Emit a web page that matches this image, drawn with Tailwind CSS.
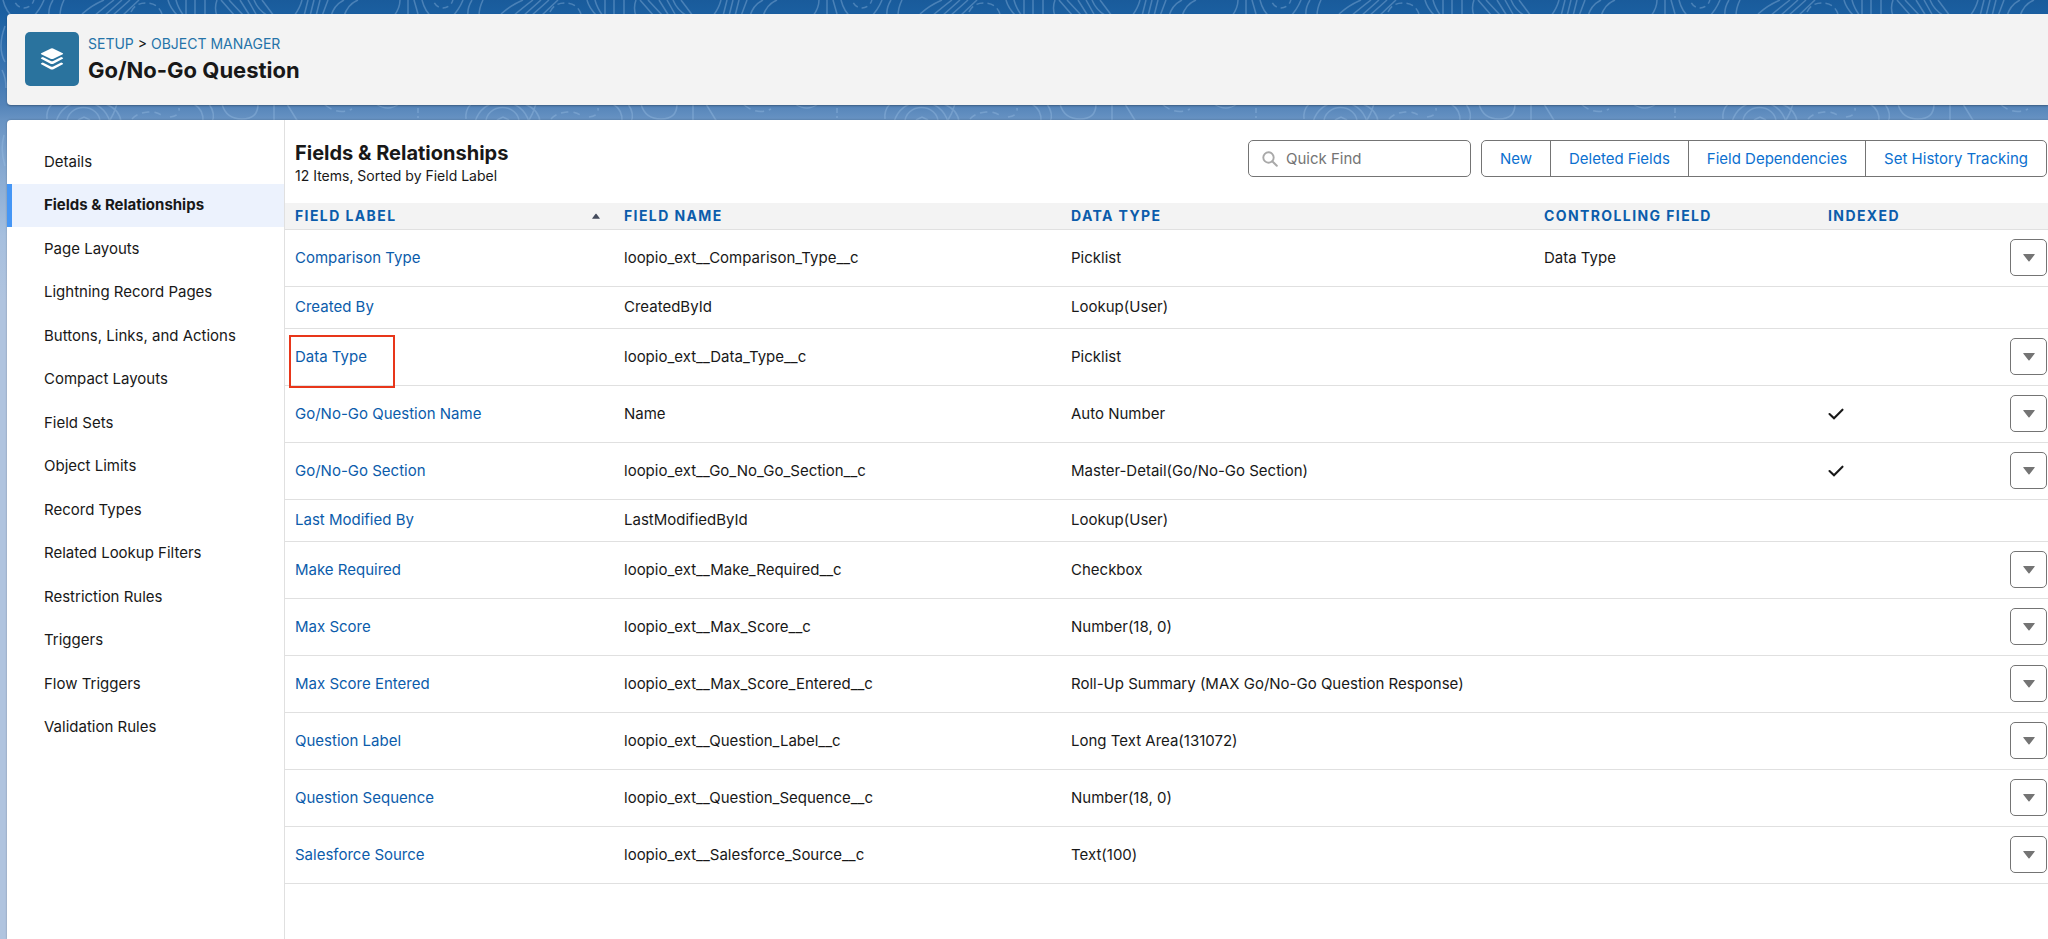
<!DOCTYPE html>
<html lang="en">
<head>
<meta charset="utf-8">
<meta name="viewport" content="width=device-width, initial-scale=1">
<title>Go/No-Go Question | Object Manager</title>
<script src="https://cdn.jsdelivr.net/npm/@tailwindcss/browser@4"></script>
</head>
<body class="relative isolate min-h-screen flex flex-col bg-[#b0c4df] font-['Inter','Liberation_Sans',sans-serif] text-[15px] leading-5 text-[#181818] overflow-x-hidden">

<!-- Topographic page background -->
<div class="absolute inset-x-0 top-0 -z-10 h-[300px] bg-[linear-gradient(to_bottom,#195b9b_0px,#1b60a2_16px,#3470ae_60px,#5484b9_105px,#6893c3_120px,#86a9d1_170px,#a6bfde_235px,#b0c4df_300px)]">
  <svg class="w-full h-full" aria-hidden="true">
    <defs>
      <pattern id="topo" width="419" height="300" patternUnits="userSpaceOnUse">
        <g fill="none" stroke="#9fc3e6" stroke-opacity=".36" stroke-width="1.5">
          <circle cx="24" cy="-2" r="10" stroke-dasharray="6 4"/>
          <path d="M3 0Q6 12 14 18M44 0Q40 10 32 18M53 0Q48 8 49 16M64 0Q60 8 60 16"/>
          <path d="M82 14Q92 5 104 0M94 16Q106 6 114 0M104 16L122 0M112 16L130 0M122 16L139 0"/>
          <path d="M131 12Q135 3 146 3Q158 3 162 14" stroke-dasharray="7 4"/>
          <path d="M168 0Q170 8 178 16M176 0Q178 8 184 16M186 0V16M195 0V16M205 0V16M217 0Q214 8 217 16"/>
          <path d="M221 0L235 16M229 0L244 16M240 0L250 16M248 0L257 16M254 0Q258 10 268 16M262 0L274 16"/>
          <path d="M294 16Q300 8 302 0M304 16L308 0M310 16L314 0M316 16L320 0M322 16L328 0M331 16Q334 5 344 0M344 16Q348 4 358 0"/>
          <path d="M394 16Q400 8 400 0M408 0V14M414 0L418 14"/>
          <path d="M47 119Q46 110 52 104M56 122A28 28 0 0 1 110 122M67 122A16 14 0 0 1 100 122M78 120L84 117L90 120M106 104Q120 110 121 122M117 104Q114 114 109 122"/>
          <path d="M132 119Q137 113 148 112T164 118M170 117Q180 116 179 108" stroke-dasharray="7 5"/>
          <path d="M194 104Q204 110 203 122M209 104Q216 114 212 122M222 104Q226 119 242 119Q258 119 258 104M274 104V122M287 104L298 122"/>
          <path d="M324 104Q338 116 352 109" stroke-dasharray="9 5"/>
          <path d="M376 104Q388 112 399 104"/>
          <path d="M418 108V118" stroke-dasharray="5 3"/>
          <path d="M5 26Q-3 48 5 62M2 70Q6 78 6 88M4 135Q0 150 5 166"/>
        </g>
      </pattern>
    </defs>
    <rect width="100%" height="100%" fill="url(#topo)"/>
  </svg>
</div>

<!-- Shared icons -->
<svg class="hidden" aria-hidden="true">
  <symbol id="caret" viewBox="0 0 12 8"><path d="M.6 0h10.8q.6.3.2.8L6.500 7.300q-.5.5-1 0L.4.8Q0 .3.600 0z" fill="currentColor"/></symbol>
  <symbol id="check" viewBox="0 0 16 12"><path d="M1.500 6L6 10.300L14.500 1.700" fill="none" stroke="currentColor" stroke-width="2.100" stroke-linecap="round"/></symbol>
</svg>

<header class="ml-[7px] mt-[14px] flex items-center gap-[9px] rounded-l-[4px] bg-[#f3f3f3] pl-[18px] pt-[18px] pb-[19px] shadow-[0_1px_2px_rgba(0,0,0,0.3)]">
  <div class="flex size-[54px] items-center justify-center rounded-[5px] bg-[#2a739e]">
    <svg class="h-[22px] w-6 text-white" viewBox="0 0 24 22" fill="currentColor" aria-hidden="true">
      <path d="M12 0.300Q12.500.3 13 .6L22.800 5.200Q23.500 5.700 22.800 6.200L13 10.900Q12 11.300 11 10.900L1.200 6.200Q.5 5.700 1.200 5.200L11 .6Q11.500.3 12 .3z"/>
      <path d="M1.200 9.800L2.800 9.100L10.800 13Q12 13.500 13.200 13L21.200 9.100L22.800 9.800Q23.500 10.300 22.800 10.800L13 15.900Q12 16.300 11 15.900L1.200 10.800Q.5 10.300 1.200 9.800z"/>
      <path d="M1.200 15.300L2.800 14.600L10.800 18.500Q12 19 13.200 18.500L21.200 14.600L22.800 15.300Q23.500 15.800 22.800 16.300L13 21.400Q12 21.800 11 21.400L1.200 16.300Q.5 15.800 1.200 15.300z"/>
    </svg>
  </div>
  <div class="pt-[2px]">
    <nav aria-label="Breadcrumb" class="text-sm"><a href="#" class="text-[#2574a9]">SETUP</a> &gt; <a href="#" class="text-[#2574a9]">OBJECT MANAGER</a></nav>
    <h1 class="text-[22px] leading-8 font-bold">Go/No-Go Question</h1>
  </div>
</header>

<div class="ml-[7px] mt-[15px] flex flex-1 rounded-tl-[4px] bg-white shadow-[0_0_2px_rgba(0,0,0,0.3)]">
  <nav aria-label="Object settings" class="w-[278px] shrink-0 border-r border-[#e0e0e0] pt-5">
    <ul class="grid h-[609px] auto-rows-fr [&_a]:flex [&_a]:h-full [&_a]:items-center [&_a]:pl-[37px]">
      <li><a href="#">Details</a></li>
      <li class="border-l-[5px] border-[#4596f5] bg-[#ecf2fd] font-bold"><a href="#" aria-current="page" class="-ml-[5px]">Fields &amp; Relationships</a></li>
      <li><a href="#">Page Layouts</a></li>
      <li><a href="#">Lightning Record Pages</a></li>
      <li><a href="#">Buttons, Links, and Actions</a></li>
      <li><a href="#">Compact Layouts</a></li>
      <li><a href="#">Field Sets</a></li>
      <li><a href="#">Object Limits</a></li>
      <li><a href="#">Record Types</a></li>
      <li><a href="#">Related Lookup Filters</a></li>
      <li><a href="#">Restriction Rules</a></li>
      <li><a href="#">Triggers</a></li>
      <li><a href="#">Flow Triggers</a></li>
      <li><a href="#">Validation Rules</a></li>
    </ul>
  </nav>

  <main class="min-w-0 flex-1">
    <div class="flex h-[83px] items-start justify-between pl-[10px] pr-px pt-5">
      <div>
        <h2 class="text-xl leading-[26px] font-bold">Fields &amp; Relationships</h2>
        <p class="text-sm">12 Items, Sorted by Field Label</p>
      </div>
      <div class="flex gap-[10px]">
        <label class="flex h-[37px] w-[223px] items-center gap-2 rounded-[5px] border border-[#747474] bg-white pl-[13px]">
          <svg class="size-4 shrink-0 text-[#a9a9a9]" viewBox="0 0 16 16" fill="none" stroke="currentColor" stroke-linecap="round" aria-hidden="true"><circle cx="6.500" cy="6.500" r="5.200" stroke-width="1.900"/><path d="M10.500 10.500L14.800 14.800" stroke-width="2"/></svg>
          <input type="search" aria-label="Quick Find" placeholder="Quick Find" class="w-full min-w-0 bg-transparent outline-none placeholder:text-[#747474]">
        </label>
        <div class="flex h-[37px] divide-x divide-[#747474] rounded-[5px] border border-[#747474] text-[#0b70cf] [&>button]:px-[18px]">
          <button type="button">New</button>
          <button type="button">Deleted Fields</button>
          <button type="button">Field Dependencies</button>
          <button type="button">Set History Tracking</button>
        </div>
      </div>
    </div>

    <table class="w-full table-fixed border-collapse text-left [&_td]:py-0 [&_td]:pl-[10px] [&_th]:py-0 [&_th]:pl-[10px]">
      <thead class="bg-[#f3f3f3] text-sm tracking-widest text-[#0b5cab]">
        <tr class="h-[26px] border-b border-[#e0e0e0]">
          <th scope="col" aria-sort="ascending" class="w-[329px]"><div class="flex items-center justify-between pr-[14px]">FIELD LABEL <svg class="h-[6px] w-2 rotate-180 text-[#444b5c]" aria-hidden="true"><use href="#caret"/></svg></div></th>
          <th scope="col" class="w-[447px]">FIELD NAME</th>
          <th scope="col" class="w-[473px]">DATA TYPE</th>
          <th scope="col" class="w-[284px]">CONTROLLING FIELD</th>
          <th scope="col">INDEXED</th>
          <th scope="col" class="w-[60px]" aria-label="Actions"></th>
        </tr>
      </thead>
      <tbody class="[&_a]:text-[#0b5cab] [&_tr]:border-b [&_tr]:border-[#e0e0e0] [&_button]:ml-auto [&_button]:mr-px [&_button]:flex [&_button]:size-[37px] [&_button]:items-center [&_button]:justify-center [&_button]:rounded-[5px] [&_button]:border [&_button]:border-[#747474] [&_button]:text-[#747474] [&_button_svg]:h-2 [&_button_svg]:w-3">
        <tr class="h-[57px]"><td><a href="#">Comparison Type</a></td><td>loopio_ext__Comparison_Type__c</td><td>Picklist</td><td>Data Type</td><td></td><td><button type="button" aria-label="Comparison Type actions"><svg><use href="#caret"/></svg></button></td></tr>
        <tr class="h-[42px]"><td><a href="#">Created By</a></td><td>CreatedById</td><td>Lookup(User)</td><td></td><td></td><td></td></tr>
        <tr class="h-[57px]"><td class="relative"><a href="#">Data Type</a><span class="pointer-events-none absolute left-1 top-[6px] h-[53px] w-[106px] border-2 border-[#e8361a]"></span></td><td>loopio_ext__Data_Type__c</td><td>Picklist</td><td></td><td></td><td><button type="button" aria-label="Data Type actions"><svg><use href="#caret"/></svg></button></td></tr>
        <tr class="h-[57px]"><td><a href="#">Go/No-Go Question Name</a></td><td>Name</td><td>Auto Number</td><td></td><td><svg class="h-3 w-4" role="img" aria-label="Indexed"><use href="#check"/></svg></td><td><button type="button" aria-label="Go/No-Go Question Name actions"><svg><use href="#caret"/></svg></button></td></tr>
        <tr class="h-[57px]"><td><a href="#">Go/No-Go Section</a></td><td>loopio_ext__Go_No_Go_Section__c</td><td>Master-Detail(Go/No-Go Section)</td><td></td><td><svg class="h-3 w-4" role="img" aria-label="Indexed"><use href="#check"/></svg></td><td><button type="button" aria-label="Go/No-Go Section actions"><svg><use href="#caret"/></svg></button></td></tr>
        <tr class="h-[42px]"><td><a href="#">Last Modified By</a></td><td>LastModifiedById</td><td>Lookup(User)</td><td></td><td></td><td></td></tr>
        <tr class="h-[57px]"><td><a href="#">Make Required</a></td><td>loopio_ext__Make_Required__c</td><td>Checkbox</td><td></td><td></td><td><button type="button" aria-label="Make Required actions"><svg><use href="#caret"/></svg></button></td></tr>
        <tr class="h-[57px]"><td><a href="#">Max Score</a></td><td>loopio_ext__Max_Score__c</td><td>Number(18, 0)</td><td></td><td></td><td><button type="button" aria-label="Max Score actions"><svg><use href="#caret"/></svg></button></td></tr>
        <tr class="h-[57px]"><td><a href="#">Max Score Entered</a></td><td>loopio_ext__Max_Score_Entered__c</td><td>Roll-Up Summary (MAX Go/No-Go Question Response)</td><td></td><td></td><td><button type="button" aria-label="Max Score Entered actions"><svg><use href="#caret"/></svg></button></td></tr>
        <tr class="h-[57px]"><td><a href="#">Question Label</a></td><td>loopio_ext__Question_Label__c</td><td>Long Text Area(131072)</td><td></td><td></td><td><button type="button" aria-label="Question Label actions"><svg><use href="#caret"/></svg></button></td></tr>
        <tr class="h-[57px]"><td><a href="#">Question Sequence</a></td><td>loopio_ext__Question_Sequence__c</td><td>Number(18, 0)</td><td></td><td></td><td><button type="button" aria-label="Question Sequence actions"><svg><use href="#caret"/></svg></button></td></tr>
        <tr class="h-[57px]"><td><a href="#">Salesforce Source</a></td><td>loopio_ext__Salesforce_Source__c</td><td>Text(100)</td><td></td><td></td><td><button type="button" aria-label="Salesforce Source actions"><svg><use href="#caret"/></svg></button></td></tr>
      </tbody>
    </table>
  </main>
</div>
</body>
</html>
